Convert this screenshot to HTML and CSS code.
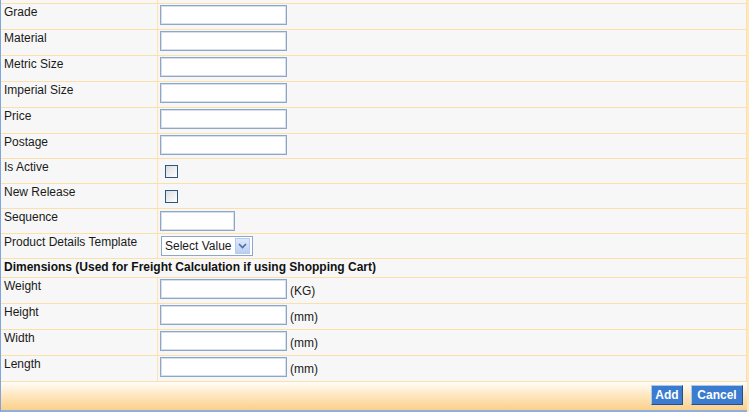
FILE: index.html
```html
<!DOCTYPE html>
<html>
<head>
<meta charset="utf-8">
<link rel="stylesheet" href="styles.css">
</head>
<body>
<div class="form">
  <div class="row cut"><div class="lbl"></div><div class="fld"></div></div>
  <div class="row"><div class="lbl">Grade</div><div class="fld"><input class="txt" type="text"></div></div>
  <div class="row"><div class="lbl">Material</div><div class="fld"><input class="txt" type="text"></div></div>
  <div class="row"><div class="lbl">Metric Size</div><div class="fld"><input class="txt" type="text"></div></div>
  <div class="row"><div class="lbl">Imperial Size</div><div class="fld"><input class="txt" type="text"></div></div>
  <div class="row"><div class="lbl">Price</div><div class="fld"><input class="txt" type="text"></div></div>
  <div class="row s"><div class="lbl">Postage</div><div class="fld"><input class="txt" type="text"></div></div>
  <div class="row s"><div class="lbl">Is Active</div><div class="fld"><input class="chk" type="checkbox"></div></div>
  <div class="row s"><div class="lbl">New Release</div><div class="fld"><input class="chk" type="checkbox"></div></div>
  <div class="row s"><div class="lbl">Sequence</div><div class="fld"><input class="txt short" type="text"></div></div>
  <div class="row s"><div class="lbl">Product Details Template</div><div class="fld">
    <div class="sel-wrap">
      <select class="sel"><option>Select Value</option></select>
      <span class="sel-btn"><svg width="9" height="6" viewBox="0 0 9 6"><path d="M1 1 L4.5 4.5 L8 1" fill="none" stroke="#4a6ea8" stroke-width="1.6"/></svg></span>
    </div>
  </div></div>
  <div class="row head"><div class="hd">Dimensions (Used for Freight Calculation if using Shopping Cart)</div></div>
  <div class="row"><div class="lbl">Weight</div><div class="fld"><input class="txt" type="text"><span class="unit">(KG)</span></div></div>
  <div class="row"><div class="lbl">Height</div><div class="fld"><input class="txt" type="text"><span class="unit">(mm)</span></div></div>
  <div class="row"><div class="lbl">Width</div><div class="fld"><input class="txt" type="text"><span class="unit">(mm)</span></div></div>
  <div class="row"><div class="lbl">Length</div><div class="fld"><input class="txt" type="text"><span class="unit">(mm)</span></div></div>
  <div class="footer">
    <button class="btn add" type="button">Add</button>
    <button class="btn cancel" type="button">Cancel</button>
  </div>
</div>
</body>
</html>
```
FILE: styles.css
```css
html, body {
  margin: 0;
  padding: 0;
  background: #ffffff;
}
body {
  font-family: "Liberation Sans", Arial, sans-serif;
  font-size: 12px;
  color: #1a1a1a;
}
.form {
  width: 746px;
  border-left: 1px solid #7fa6dc;
  border-right: 2px solid #fde8c2;
  background: #f7f7f7;
}
.row {
  display: grid;
  grid-template-columns: 157px 1fr;
  height: 25px;
  border-top: 1px solid #fcdfa9;
  border-right: 1px solid #fcdfa9;
  background: #f7f7f7;
}
.row.s { height: 24px; }
.row.cut { height: 3px; border-top: none; }
.row.head {
  display: block;
  height: 18px;
}
.lbl {
  border-right: 1px solid #fde3b4;
  padding: 1px 0 0 3px;
  line-height: 14px;
  white-space: nowrap;
}
.hd {
  padding: 1px 0 0 3px;
  line-height: 14px;
  font-weight: bold;
  color: #111;
}
.fld {
  display: flex;
  align-items: flex-start;
  padding: 1px 0 0 2px;
}
.txt {
  box-sizing: border-box;
  width: 127px;
  height: 20px;
  margin: 0;
  border: 1px solid #8fa7c6;
  box-shadow: inset 0 0 0 1px #d6dfeb;
  background: #ffffff;
  font: 12px "Liberation Sans", Arial, sans-serif;
}
.txt.short { width: 75px; margin-top: 1px; }
.unit {
  margin: 5px 0 0 3px;
  line-height: 14px;
}
.chk {
  -webkit-appearance: none;
  appearance: none;
  box-sizing: border-box;
  width: 13px;
  height: 13px;
  margin: 5px 0 0 5px;
  border: 1px solid #2f5579;
  background: linear-gradient(135deg, #d9dcdf 0%, #f4f5f6 70%, #ffffff 100%);
}
.sel-wrap {
  position: relative;
  width: 92px;
  height: 20px;
  margin: 1px 0 0 1px;
}
.sel {
  -webkit-appearance: none;
  appearance: none;
  box-sizing: border-box;
  width: 92px;
  height: 20px;
  margin: 0;
  padding: 0 0 0 3px;
  border: 1px solid #8fa7c6;
  background: #ffffff;
  color: #1a1a1a;
  font: 12px "Liberation Sans", Arial, sans-serif;
}
.sel-btn {
  position: absolute;
  top: 2px;
  right: 3px;
  box-sizing: border-box;
  width: 15px;
  height: 16px;
  border: 1px solid #b9cbec;
  background: linear-gradient(#dde8fb, #bccff3);
  display: flex;
  align-items: center;
  justify-content: center;
}
.footer {
  box-sizing: border-box;
  height: 31px;
  border-top: 1px solid #fcdfa9;
  border-bottom: 2px solid #8eb0de;
  background: linear-gradient(#fffdf9 0%, #fee6bd 50%, #fbd08a 100%);
  display: flex;
  justify-content: flex-end;
  align-items: flex-start;
  gap: 8px;
  padding: 3px 4px 0 0;
}
.btn {
  box-sizing: border-box;
  height: 20px;
  margin: 0;
  padding: 0;
  border: 1px solid;
  border-color: #a9c9f0 #1f4f96 #1f4f96 #a9c9f0;
  background: #3b7bd0;
  color: #ffffff;
  font: bold 12px "Liberation Sans", Arial, sans-serif;
  text-align: center;
}
.btn.add { width: 32px; }
.btn.cancel { width: 52px; }
```
